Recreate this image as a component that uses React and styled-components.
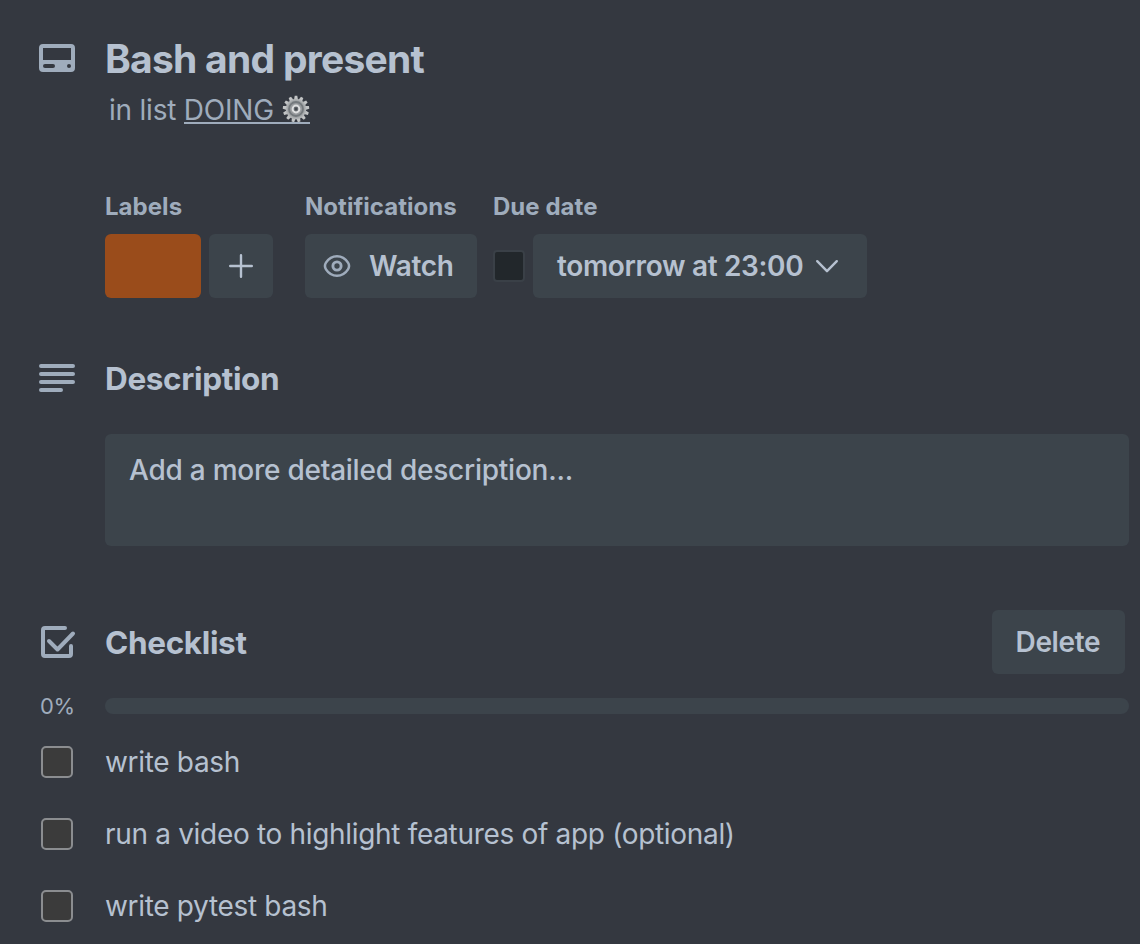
import React from "react";
import styled, { createGlobalStyle } from "styled-components";

const Global = createGlobalStyle`
  * { box-sizing: border-box; }
  body { margin: 0; background: #343840; }
`;

const text = "#b6c1d0";
const subtle = "#9facbc";
const surface = "#3c444b";

const Card = styled.main`
  width: 1140px;
  height: 944px;
  overflow: hidden;
  padding: 34px 11px 0 0;
  background: #343840;
  color: ${text};
  font-family: Inter, "Liberation Sans", sans-serif;
  font-size: 28px;
  line-height: 40px;
  white-space: nowrap;
`;

const Row = styled.section`
  display: grid;
  grid-template-columns: 105px 1fr;
  align-items: center;
  height: ${(p) => p.$height}px;
  margin-top: ${(p) => p.$top || 0}px;
`;

const IconCell = styled.div`
  display: flex;
  padding-left: 33px;
  color: ${subtle};
`;

const Title = styled.h1`
  margin: 0;
  padding-top: 2px;
  font-size: 39px;
  line-height: 46px;
  font-weight: 700;
  letter-spacing: -0.74px;
`;

const SubTitle = styled.p`
  display: flex;
  margin: 0 0 0 109px;
  padding-top: 8px;
  height: 48px;
  font-size: 28px;
  line-height: 40px;
  letter-spacing: -0.22px;
  white-space: pre;
  color: ${subtle};
`;

const ListLink = styled.a`
  display: flex;
  height: 34px;
  border-bottom: 2px solid ${subtle};
`;

const SectionTitle = styled.h2`
  margin: 0;
  padding-top: 2px;
  font-size: 31.5px;
  line-height: 40px;
  font-weight: 700;
  letter-spacing: -0.35px;
`;

const Fields = styled.div`
  display: flex;
  margin: 61px 0 0 105px;
`;

const Field = styled.div`
  margin-right: ${(p) => p.$gap || 0}px;
`;

const FieldName = styled.h3`
  margin: 0;
  height: 43px;
  font-size: 24px;
  line-height: 32px;
  font-weight: 700;
  letter-spacing: 0.04px;
  color: ${subtle};
`;

const FieldBody = styled.div`
  display: flex;
  align-items: center;
  gap: 8px;
`;

const Label = styled.div`
  width: 96px;
  height: 64px;
  border-radius: 6px;
  background: #9a4c1b;
`;

const Button = styled.button`
  display: flex;
  align-items: center;
  width: ${(p) => p.$width}px;
  height: 64px;
  padding: 0 0 0 ${(p) => p.$pad}px;
  border: 0;
  border-radius: 6px;
  background: ${surface};
  color: ${text};
  font: 600 28px/40px Inter, "Liberation Sans", sans-serif;
  letter-spacing: -0.34px;
  white-space: nowrap;
`;

const DueCheck = styled.div`
  width: 32px;
  height: 32px;
  border: 2px solid #3a4047;
  border-radius: 4px;
  background: #22272b;
`;

const Description = styled.div`
  height: 112px;
  margin: 32px 0 0 105px;
  padding: 16px 24px;
  border-radius: 6px;
  background: ${surface};
  font-weight: 500;
  letter-spacing: -0.24px;
`;

const ChecklistHead = styled.div`
  display: flex;
  align-items: center;
  justify-content: space-between;
  padding-right: 4px;
`;

const Percent = styled.span`
  padding-left: 40px;
  font-size: 22px;
  line-height: 32px;
  letter-spacing: -0.3px;
  color: ${subtle};
`;

const Track = styled.div`
  height: 16px;
  border-radius: 8px;
  background: ${surface};
`;

const Check = styled.div`
  width: 32px;
  height: 32px;
  margin-left: 41px;
  border: 2px solid #8b8d90;
  border-radius: 5px;
  background: #3b3b3b;
`;

const Items = styled.div`
  margin-top: 4px;
`;

const ItemText = styled.span`
  letter-spacing: -0.32px;
`;

const CardIcon = () => (
  <svg width="48" height="48" viewBox="0 0 48 48">
    <path fill="currentColor" fillRule="evenodd" d="M10 10h28a4 4 0 0 1 4 4v20a4 4 0 0 1-4 4H10a4 4 0 0 1-4-4V14a4 4 0 0 1 4-4Zm0 4v12h28V14H10Zm2 16a2 2 0 0 0 0 4h8a2 2 0 0 0 0-4h-8Zm24 0a2 2 0 1 0 0 4 2 2 0 0 0 0-4Z" />
  </svg>
);

const LinesIcon = () => (
  <svg width="48" height="48" viewBox="0 0 48 48" stroke="currentColor" strokeWidth="4" strokeLinecap="round">
    <path d="M8 12h32M8 20h32M8 28h32M8 36h20" />
  </svg>
);

const ChecklistIcon = () => (
  <svg width="48" height="48" viewBox="0 0 48 48" fill="none" stroke="currentColor" strokeWidth="4" strokeLinecap="round" strokeLinejoin="round">
    <path d="M32 10H12a2 2 0 0 0-2 2v24a2 2 0 0 0 2 2h24a2 2 0 0 0 2-2V28" />
    <path d="m16 23 8.5 8.5 15.5-16" />
  </svg>
);

const PlusIcon = () => (
  <svg width="24" height="24" viewBox="0 0 24 24" stroke="currentColor" strokeWidth="2.4" strokeLinecap="round">
    <path d="M12 1.2v21.6M1.2 12h21.6" />
  </svg>
);

const EyeIcon = styled(({ className }) => (
  <svg className={className} width="28" height="24" viewBox="0 0 28 24" fill="none" stroke="currentColor" strokeWidth="2.5">
    <path d="M14 2.3c5.5 0 8.9 3.1 11 6.4 1.6 2.5 1.6 4.1 0 6.6-2.1 3.3-5.5 6.4-11 6.4S5.1 18.6 3 15.3c-1.6-2.5-1.6-4.1 0-6.6C5.1 5.4 8.5 2.3 14 2.3Z" />
    <circle cx="14" cy="12" r="4.1" strokeWidth="2.9" />
  </svg>
))`
  margin-right: 18px;
  color: ${subtle};
`;

const ChevronIcon = styled(({ className }) => (
  <svg className={className} width="24" height="16" viewBox="0 0 24 16" fill="none" stroke="currentColor" strokeWidth="2.4" strokeLinecap="round" strokeLinejoin="round">
    <path d="m2.2 3.2 9.8 10 9.8-10" />
  </svg>
))`
  margin-left: 12px;
`;

const teeth = Array.from({ length: 13 }, (_, i) => (i * 360) / 13);

const GearIcon = styled(({ className }) => (
  <svg className={className} width="28" height="28" viewBox="0 0 28 28">
    {teeth.map((angle) => (
      <path key={angle} d="M12 5 12.7.8h2.6L16 5Z" fill="#c2c4c5" transform={`rotate(${angle} 14 14)`} />
    ))}
    <circle cx="14" cy="14" r="9.6" fill="#a1a4a6" stroke="#b0b3b5" strokeWidth="1.4" />
    <circle cx="14" cy="14" r="7" fill="#989b9e" stroke="#74797d" strokeWidth="1.8" />
    <circle cx="14" cy="14" r="3.4" fill="#6c7176" stroke="#dedfe0" strokeWidth="2" />
    <circle cx="14" cy="14" r="1.4" fill="#45494e" />
  </svg>
))`
  margin-top: 5px;
`;

const items = [
  "write bash",
  "run a video to highlight features of app (optional)",
  "write pytest bash",
];

export default function App() {
  return (
    <Card>
      <Global />
      <Row $height={48}>
        <IconCell><CardIcon /></IconCell>
        <Title>Bash and present</Title>
      </Row>
      <SubTitle>in list <ListLink>DOING <GearIcon /></ListLink></SubTitle>
      <Fields>
        <Field $gap={32}>
          <FieldName>Labels</FieldName>
          <FieldBody>
            <Label />
            <Button $width={64} $pad={20} aria-label="Add label"><PlusIcon /></Button>
          </FieldBody>
        </Field>
        <Field $gap={16}>
          <FieldName>Notifications</FieldName>
          <FieldBody>
            <Button $width={172} $pad={18}><EyeIcon />Watch</Button>
          </FieldBody>
        </Field>
        <Field>
          <FieldName>Due date</FieldName>
          <FieldBody>
            <DueCheck />
            <Button $width={334} $pad={24}>tomorrow at 23:00<ChevronIcon /></Button>
          </FieldBody>
        </Field>
      </Fields>
      <Row $height={48} $top={56}>
        <IconCell><LinesIcon /></IconCell>
        <SectionTitle>Description</SectionTitle>
      </Row>
      <Description>Add a more detailed description...</Description>
      <Row $height={64} $top={64}>
        <IconCell><ChecklistIcon /></IconCell>
        <ChecklistHead>
          <SectionTitle>Checklist</SectionTitle>
          <Button $width={133} $pad={23.5}>Delete</Button>
        </ChecklistHead>
      </Row>
      <Row $height={32} $top={16}>
        <Percent>0%</Percent>
        <Track />
      </Row>
      <Items>
        {items.map((item) => (
          <Row key={item} $height={72}>
            <Check />
            <ItemText>{item}</ItemText>
          </Row>
        ))}
      </Items>
    </Card>
  );
}
